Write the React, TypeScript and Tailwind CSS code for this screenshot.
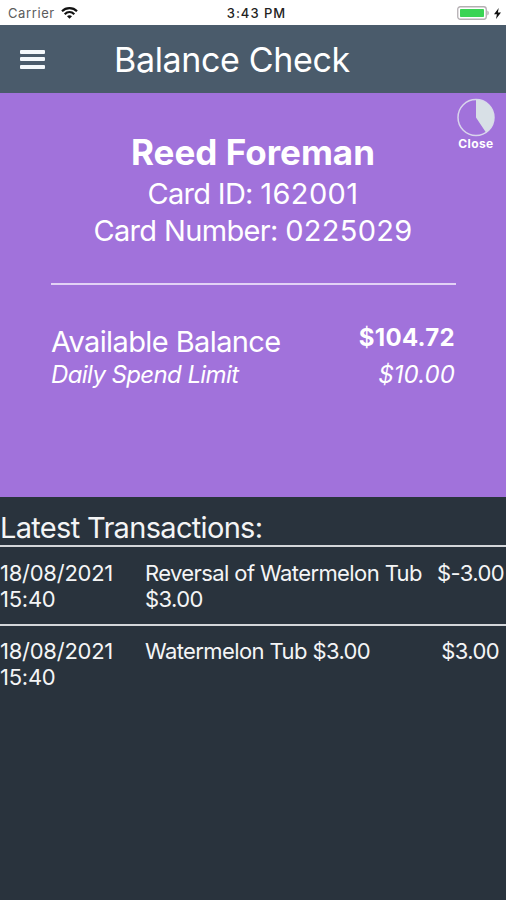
const transactions = [
  {
    date: '18/08/2021',
    time: '15:40',
    lines: ['Reversal of Watermelon Tub', '$3.00'],
    amount: '$-3.00',
    rowClass: 'h-[79px] pt-[13px]',
    amountClass: 'mr-[2px]',
  },
  {
    date: '18/08/2021',
    time: '15:40',
    lines: ['Watermelon Tub $3.00'],
    amount: '$3.00',
    rowClass: 'h-[78px] pt-[12px]',
    amountClass: 'mr-[7px]',
  },
];

function StatusBar() {
  return (
    <div className="flex h-[25px] items-center justify-between bg-white pt-px pr-[5px] pl-2 text-black">
      <div className="flex w-[150px] items-center gap-[6px]">
        <span className="text-[13px] leading-4 tracking-[0.6px] text-[#5c5c5c]">Carrier</span>
        <svg width="17" height="12" viewBox="0 0 17 12" fill="none" stroke="#111" strokeWidth="2.1">
          <path d="M1 4.3C5 .1 12 .1 16 4.3" />
          <path d="M3.7 7.2c2.8-2.8 6.8-2.8 9.6 0" />
          <path d="M8.5 11.7 6 9.2c1.5-1.3 3.5-1.3 5 0Z" fill="#111" stroke="none" />
        </svg>
      </div>
      <span className="ml-[4px] text-[13px] leading-4 font-medium tracking-[1px] text-[#222]">3:43 PM</span>
      <div className="flex w-[150px] items-center justify-end gap-[5px]">
        <svg width="32" height="14" viewBox="0 0 32 14">
          <rect x=".75" y=".75" width="28.5" height="12.5" rx="2.5" fill="#fff" stroke="#b5afb3" strokeWidth="1.3" />
          <rect x="3" y="3" width="24" height="8" rx=".8" fill="#3bd455" />
          <path d="M30.3 4.5c2 1 2 4 0 5Z" fill="#b5afb3" />
        </svg>
        <svg width="7" height="11" viewBox="0 0 7 11" fill="#111">
          <path d="M4.7 0 0 6.2h2.9L2 11l5-6.5H3.9Z" />
        </svg>
      </div>
    </div>
  );
}

function Header() {
  return (
    <header className="flex h-[68px] items-center bg-[#4a5b6b] pl-5">
      <div className="flex w-[94px] flex-col gap-[3.5px]">
        <span className="h-1 w-[25px] rounded-[1px] bg-[#f4f8fb]" />
        <span className="h-1 w-[25px] rounded-[1px] bg-[#f4f8fb]" />
        <span className="h-1 w-[25px] rounded-[1px] bg-[#f4f8fb]" />
      </div>
      <h1 className="pt-[2px] text-[34px] leading-10 tracking-[-0.35px] whitespace-nowrap">Balance Check</h1>
    </header>
  );
}

function CloseTimer() {
  return (
    <div className="absolute top-[5px] right-[11px] flex w-[38px] flex-col items-center">
      <svg width="38" height="39" viewBox="0 0 38 39">
        <circle cx="19" cy="19.5" r="18" fill="none" stroke="#d9d5ec" strokeWidth="1.5" />
        <path d="M19 19.5V1.5A18 18 0 0 1 29 34.5Z" fill="#d8e0e6" />
      </svg>
      <span className="text-[12px] leading-[14px] font-bold tracking-[0.4px]">Close</span>
    </div>
  );
}

function CardPanel() {
  return (
    <section className="relative h-[404px] bg-[#a172db] px-[51px] pt-[38px]">
      <CloseTimer />
      <div className="flex flex-col items-center whitespace-nowrap">
        <h2 className="text-[35px] leading-[42px] font-bold">Reed Foreman</h2>
        <p className="mt-[2px] text-[29px] leading-[37px] tracking-[-0.7px]">
          Card ID: <span className="tracking-[0.4px]">162001</span>
        </p>
        <p className="text-[29px] leading-[37px] tracking-[-0.65px]">
          Card Number: <span className="tracking-[0.3px]">0225029</span>
        </p>
      </div>
      <div className="mt-[34px] -mr-px h-[2px] bg-[#e2d2f5]" />
      <div className="mt-[39px] flex justify-between whitespace-nowrap">
        <div className="flex flex-col items-start">
          <span className="text-[29px] leading-[36px] tracking-[-0.6px]">Available Balance</span>
          <span className="text-[24px] leading-[30px] tracking-[-0.6px] italic">Daily Spend Limit</span>
        </div>
        <div className="flex flex-col items-end">
          <span className="text-[24px] leading-[28px] font-bold tracking-[0.3px]">$104.72</span>
          <span className="mt-2 text-[24px] leading-[30px] tracking-[0.1px] italic">$10.00</span>
        </div>
      </div>
    </section>
  );
}

export default function App() {
  return (
    <main className="flex h-[900px] w-[506px] flex-col overflow-hidden bg-[#29333d] font-['Inter','Liberation_Sans',sans-serif] text-white">
      <StatusBar />
      <Header />
      <CardPanel />
      <section className="text-[#f4f5f6]">
        <h3 className="h-[48px] pt-[13px] text-[29px] leading-[36px] tracking-[-0.68px] whitespace-nowrap">
          Latest Transactions:
        </h3>
        {transactions.map((t) => (
          <div
            key={t.lines[0]}
            className={`flex border-t-2 border-[#d3d6da] text-[22px] leading-[26px] tracking-[-0.6px] whitespace-nowrap ${t.rowClass}`}
          >
            <div className="flex w-[145px] shrink-0 flex-col items-start tracking-[-0.25px]">
              <span>{t.date}</span>
              <span>{t.time}</span>
            </div>
            <div className="flex flex-1 flex-col items-start">
              {t.lines.map((line) => (
                <span key={line}>{line}</span>
              ))}
            </div>
            <span className={t.amountClass}>{t.amount}</span>
          </div>
        ))}
      </section>
    </main>
  );
}
